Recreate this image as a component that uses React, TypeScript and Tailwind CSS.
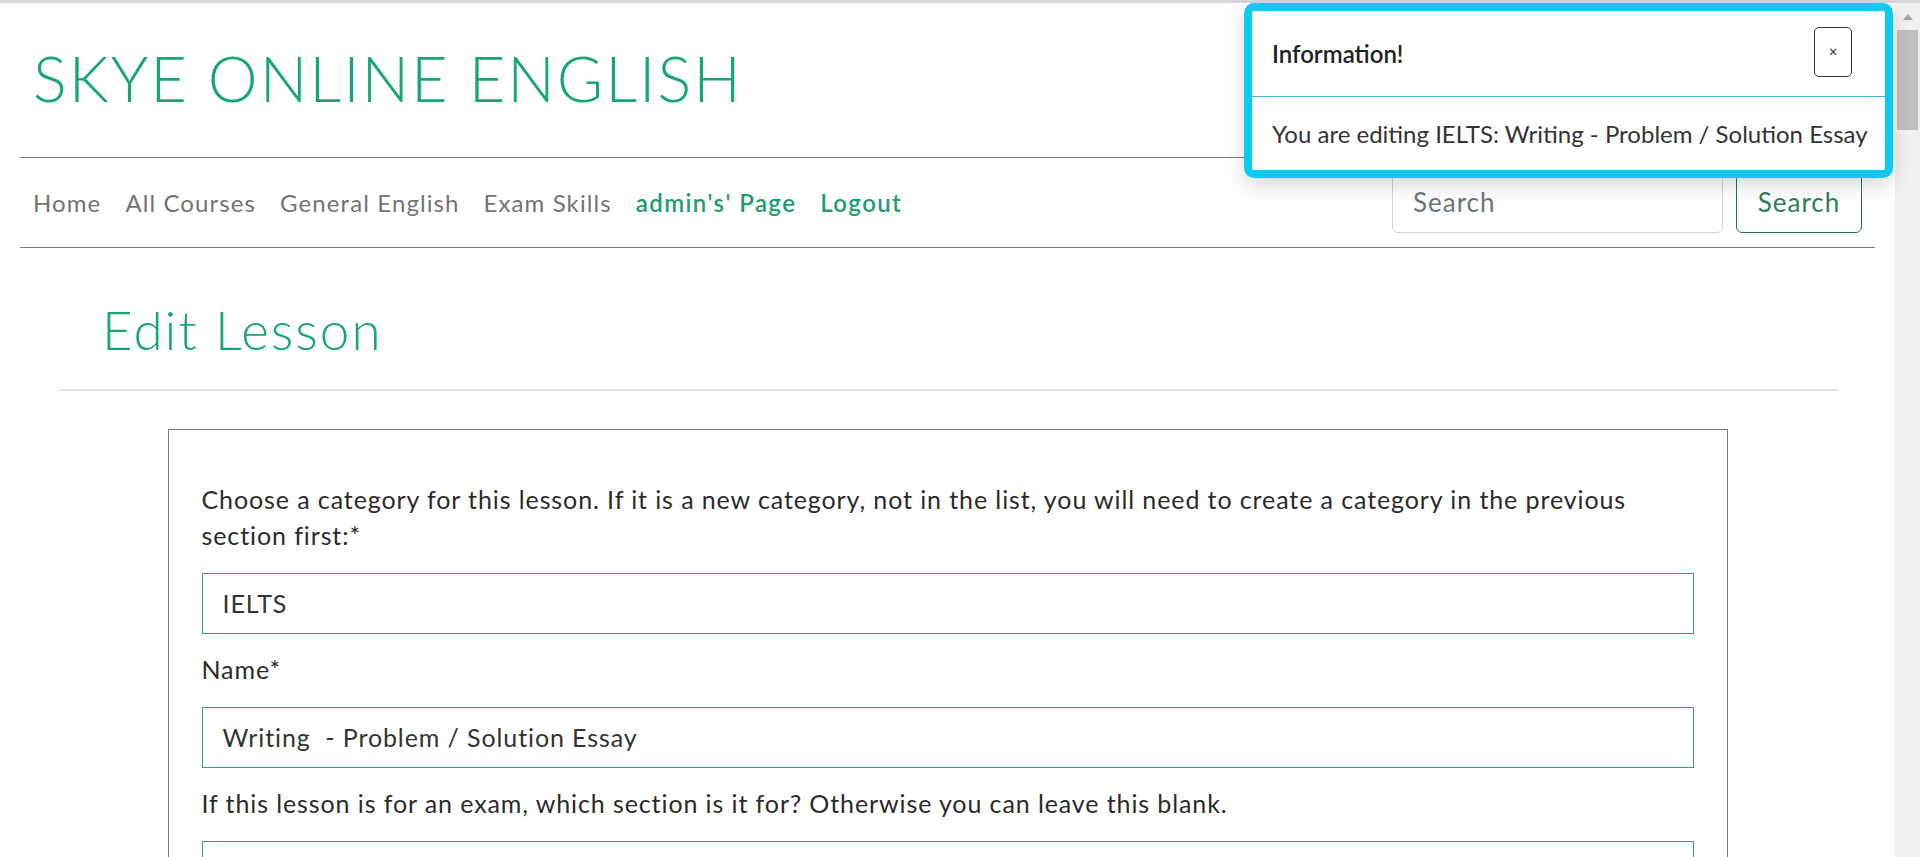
import React from "react";

const navLinks = ["Home", "All Courses", "General English", "Exam Skills"];
const adminLinks = ["admin's' Page", "Logout"];

function Field({ label, value }: { label: React.ReactNode; value?: string }) {
  return (
    <div>
      <label className="block mb-[20px] text-[25px] leading-[36px] tracking-[0.9px] text-[#2b2b2b]">{label}</label>
      <div className="mb-[17px] h-[61px] border border-[#35a083] pl-[20px] flex items-center text-[25px] tracking-[0.9px] text-[#333] whitespace-pre">
        {value}
      </div>
    </div>
  );
}

export default function App() {
  return (
    <div className="relative h-[857px] overflow-hidden bg-white font-['Lato','Open_Sans',sans-serif]">
      <div className="h-[3px] bg-[#d5d5da]" />
      <div className="flex h-[854px]">
        <main className="flex-1 px-[20px]">
          {/* header */}
          <div className="h-[154px] pt-[43px] pl-[13px]">
            <h1 className="text-[63px] leading-[63px] font-light tracking-[2px] text-[#19a57c]">
              SKYE ONLINE ENGLISH
            </h1>
          </div>
          <div className="h-px bg-[#8a7180]" />
          <nav className="h-[89px] flex items-center justify-between">
            <ul className="flex items-center ml-[1px] text-[24px]">
              {navLinks.map((l) => (
                <li key={l} className="px-[12px] tracking-[1.1px] text-[#737373]">{l}</li>
              ))}
              {adminLinks.map((l) => (
                <li key={l} className="px-[12px] tracking-[1.4px] font-semibold text-[#1e9c72]">{l}</li>
              ))}
            </ul>
            <div className="flex items-center gap-[13px] mr-[13px]">
              <div className="w-[331px] h-[60px] border border-[#ced4da] rounded-[6px] pl-[20px] flex items-center text-[26px] tracking-[1px] text-[#6c757d]">
                Search
              </div>
              <button className="w-[126px] h-[60px] border border-[#2b6e4f] rounded-[6px] text-[26px] tracking-[1px] text-[#2e7d5b]">
                Search
              </button>
            </div>
          </nav>
          <div className="h-px bg-[#8a7180]" />

          {/* content */}
          <section className="ml-[39px] mr-[37px] pt-[50px]">
            <h2 className="pl-[43px] text-[53px] leading-[64px] font-light tracking-[2px] text-[#19a57c]">Edit Lesson</h2>
            <div className="mt-[27px] h-[2px] bg-[#e4e4e4]" />
          </section>
          <div className="mx-auto mt-[38px] w-[1560px] border border-[#8a7180] px-[33px] pt-[51px]">
            <Field
              label="Choose a category for this lesson. If it is a new category, not in the list, you will need to create a category in the previous section first:*"
              value="IELTS"
            />
            <Field label="Name*" value="Writing  - Problem / Solution Essay" />
            <Field label="If this lesson is for an exam, which section is it for? Otherwise you can leave this blank." />
          </div>
        </main>

        {/* scrollbar */}
        <div className="w-[25px] bg-[#f1f1f1] flex flex-col items-center">
          <svg width="12" height="8" viewBox="0 0 12 8" className="mt-[10px]">
            <path d="M6 1 L11 7 L1 7 Z" fill="#a3a3a3" />
          </svg>
          <div className="mt-[9px] w-[21px] h-[100px] bg-[#c1c1c1]" />
        </div>
      </div>

      {/* toast */}
      <div className="absolute top-[3px] right-[27px] w-[649px] h-[175px] rounded-[10px] border-[8px] border-[#0dcaf0] bg-white shadow-[0_8px_20px_rgba(0,0,0,0.15)] overflow-hidden">
        <div className="h-[86px] border-b border-[#3fb8cc] pl-[20px] pr-[33px] flex items-center justify-between">
          <span className="text-[24px] font-semibold text-[#222]">Information!</span>
          <button className="mb-[4px] w-[38px] h-[50px] border border-[#333] rounded-[5px] text-[15px] leading-none text-[#333]">
            ×
          </button>
        </div>
        <div className="h-[73px] pl-[20px] flex items-center text-[24px] text-[#333]">
          You are editing IELTS: Writing - Problem / Solution Essay
        </div>
      </div>
    </div>
  );
}
